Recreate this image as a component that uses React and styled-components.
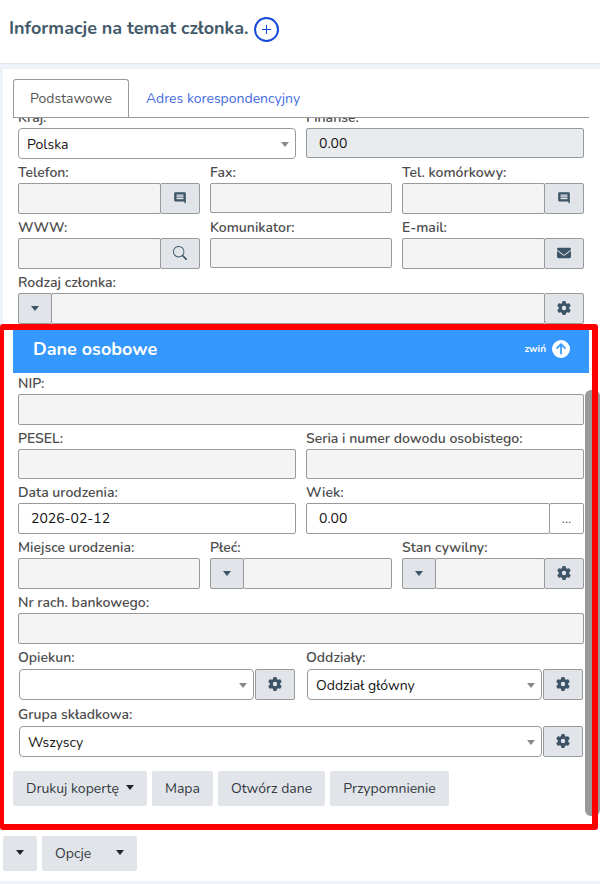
import styled, { createGlobalStyle } from "styled-components";
import { MdComment } from "react-icons/md";
import { FaEnvelope, FaGear, FaCircleArrowUp } from "react-icons/fa6";
import { BsSearch } from "react-icons/bs";

const GlobalStyle = createGlobalStyle`
  * {
    box-sizing: border-box;
  }
  body {
    margin: 0;
    background: #edf3f8;
    color: #444;
    font-family: Nunito, Lato, "Open Sans", sans-serif;
    font-size: 14px;
  }
  button, input, select {
    font: inherit;
  }
`;

const Header = styled.header`
  display: flex;
  align-items: center;
  gap: 6px;
  height: 64px;
  padding: 0 9px 5px;
  background: #fff;
  border-bottom: 1px solid #dfe7ec;
`;

const Title = styled.h1`
  margin: 0;
  padding-bottom: 2px;
  font-size: 18px;
  font-weight: bold;
  color: #435a6b;
`;

const AddButton = styled.button`
  display: flex;
  align-items: center;
  justify-content: center;
  width: 25px;
  height: 25px;
  padding: 0;
  border: 2px solid #1449d8;
  border-radius: 50%;
  background: #fff;
  color: #1449d8;
`;

const Panel = styled.main`
  margin: 5px 0 0 3px;
  padding-top: 10px;
  background: #fff;
`;

const Tabs = styled.nav`
  display: flex;
  margin: 0 11px 0 10px;
  border-bottom: 1px solid #999;
`;

const Tab = styled.a`
  padding: 0 16px;
  border: 1px solid ${({ $active }) => ($active ? "#999" : "transparent")};
  border-bottom: 0;
  border-radius: 3px 3px 0 0;
  line-height: 37px;
  color: ${({ $active }) => ($active ? "#555" : "#4169e1")};
  text-decoration: none;
`;

const ScrolledRows = styled.div`
  overflow: hidden;

  > :first-child {
    margin-top: -14px;
  }
`;

const Row = styled.div`
  display: grid;
  grid-template-columns: repeat(${({ $cols }) => $cols || 1}, minmax(0, 1fr));
  align-items: start;
  column-gap: 10px;
  padding: ${({ $flush }) => ($flush ? 0 : 3)}px 16px 0 15px;
`;

const Label = styled.label`
  display: block;
  font-weight: 600;
  line-height: 21px;
  color: #4c4c4c;
  white-space: nowrap;
`;

const Group = styled.div`
  display: flex;
  height: ${({ $short }) => ($short ? 30 : 31)}px;
`;

const Input = styled.input`
  flex: 1;
  min-width: 0;
  padding: 0 12px;
  border: 1px solid #999;
  border-radius: 2px;
  outline: none;
  background: ${({ $tone }) =>
    $tone === "white" ? "#fff" : $tone === "locked" ? "#e9ecef" : "#f4f4f4"};
  color: #111;

  &:focus {
    border-color: #3598fe;
  }
`;

const Addon = styled.button`
  display: flex;
  flex: none;
  align-items: center;
  justify-content: center;
  width: ${({ $width }) => $width || 40}px;
  margin-left: ${({ $side }) => ($side === "right" ? -1 : 0)}px;
  margin-right: ${({ $side }) => ($side === "left" ? -1 : 0)}px;
  padding: 0 0 1px;
  border: 1px solid #999;
  border-radius: 2px;
  background: ${({ $plain }) => ($plain ? "#fff" : "#e1e5ea")};
  color: ${({ $plain }) => ($plain ? "#555" : "#3d5467")};
`;

const SelectRow = styled.div`
  display: flex;
  gap: 1px;
  height: ${({ $inset }) => ($inset ? 33 : 31)}px;
  padding: ${({ $inset }) => ($inset ? 1 : 0)}px;
`;

const SelectBox = styled.div`
  display: grid;
  flex: 1;
  align-items: center;

  > * {
    grid-area: 1 / 1;
  }
  > svg {
    justify-self: end;
    margin: 2px 7px 0 0;
    pointer-events: none;
  }
`;

const Select = styled.select`
  width: 100%;
  height: 31px;
  padding: 2px 24px 0 8px;
  border: 1px solid #999;
  border-radius: 4px;
  appearance: none;
  background: #fff;
  color: #111;
`;

const Section = styled.section`
  position: relative;
  padding: 2px 0 24px;
`;

const Frame = styled.div`
  position: absolute;
  inset: 0 2px 0 -3px;
  border: 6px solid #fe0000;
  border-left-width: 4px;
  border-radius: 3px;
  pointer-events: none;
`;

const ScrollThumb = styled.div`
  position: absolute;
  top: 66px;
  right: 0;
  bottom: 14px;
  width: 15px;
  border-radius: 6px;
  background: #999;
`;

const SectionBar = styled.div`
  display: flex;
  align-items: center;
  justify-content: space-between;
  height: 47px;
  margin: 0 11px 0 10px;
  padding: 0 19px 2px 20px;
  background: #3598fe;
  color: #fff;
`;

const SectionTitle = styled.h2`
  margin: 0;
  font-size: 18px;
`;

const Collapse = styled.button`
  display: flex;
  align-items: center;
  gap: 6px;
  padding: 0;
  border: 0;
  background: none;
  color: #fff;
  font-size: 10px;
  font-weight: bold;
`;

const Actions = styled.div`
  display: flex;
  gap: 5px;
  padding: 13px 10px 0;
`;

const Button = styled.button`
  display: flex;
  align-items: center;
  gap: ${({ $gap }) => $gap || 7}px;
  height: 35px;
  padding: 0 13px;
  border: 0;
  border-radius: 2px;
  background: #e1e5ea;
  color: #333a40;
  white-space: nowrap;

  > svg {
    margin-bottom: 3px;
    color: #212529;
  }
`;

const Footer = styled.footer`
  display: flex;
  gap: 5px;
  padding: 6px 3px 10px;
  background: #fff;
`;

function Caret({ color = "currentColor" }) {
  return (
    <svg width="8" height="5" viewBox="0 0 8 5" aria-hidden="true">
      <path d="M0 0h8L4 5z" fill={color} />
    </svg>
  );
}

function TextField({ id, label, value, tone, short, menu, icon, iconLabel, dots }) {
  return (
    <div>
      <Label htmlFor={id}>{label}</Label>
      <Group $short={short}>
        {menu && (
          <Addon type="button" $side="left" $width={34} aria-label="Rozwiń">
            <Caret />
          </Addon>
        )}
        <Input id={id} defaultValue={value} $tone={tone} readOnly={tone === "locked"} />
        {icon && (
          <Addon type="button" $side="right" aria-label={iconLabel}>
            {icon}
          </Addon>
        )}
        {dots && (
          <Addon type="button" $side="right" $width={35} $plain>
            ...
          </Addon>
        )}
      </Group>
    </div>
  );
}

function SelectField({ id, label, options, settings }) {
  return (
    <div>
      <Label htmlFor={id}>{label}</Label>
      <SelectRow $inset={settings}>
        <SelectBox>
          <Select id={id}>
            {options.map((option) => (
              <option key={option}>{option}</option>
            ))}
          </Select>
          <Caret color="#888" />
        </SelectBox>
        {settings && (
          <Addon type="button" aria-label="Ustawienia">
            <FaGear size={14} />
          </Addon>
        )}
      </SelectRow>
    </div>
  );
}

export default function App() {
  const comment = <MdComment size={14} />;
  const gear = <FaGear size={14} />;

  return (
    <>
      <GlobalStyle />
      <Header>
        <Title>Informacje na temat członka.</Title>
        <AddButton type="button" aria-label="Dodaj">
          <svg width="9" height="9" viewBox="0 0 9 9">
            <path d="M4.5 0v9M0 4.5h9" stroke="currentColor" />
          </svg>
        </AddButton>
      </Header>

      <Panel>
        <Tabs>
          <Tab href="#podstawowe" $active>Podstawowe</Tab>
          <Tab href="#adres">Adres korespondencyjny</Tab>
        </Tabs>

        <ScrolledRows>
          <Row $cols={2}>
            <SelectField id="kraj" label="Kraj:" options={["Polska"]} />
            <TextField id="finanse" label="Finanse:" value="0.00" tone="locked" short />
          </Row>
          <Row $cols={3}>
            <TextField id="telefon" label="Telefon:" icon={comment} iconLabel="Wyślij SMS" />
            <TextField id="fax" label="Fax:" short />
            <TextField id="komorka" label="Tel. komórkowy:" icon={comment} iconLabel="Wyślij SMS" />
          </Row>
          <Row $cols={3}>
            <TextField id="www" label="WWW:" icon={<BsSearch size={14} />} iconLabel="Otwórz stronę" />
            <TextField id="komunikator" label="Komunikator:" short />
            <TextField id="email" label="E-mail:" icon={<FaEnvelope size={14} />} iconLabel="Wyślij e-mail" />
          </Row>
          <Row>
            <TextField id="rodzaj" label="Rodzaj członka:" menu icon={gear} iconLabel="Ustawienia" />
          </Row>
        </ScrolledRows>

        <Section>
          <SectionBar>
            <SectionTitle>Dane osobowe</SectionTitle>
            <Collapse type="button">
              zwiń
              <FaCircleArrowUp size={18} />
            </Collapse>
          </SectionBar>
          <Row $flush>
            <TextField id="nip" label="NIP:" />
          </Row>
          <Row $cols={2}>
            <TextField id="pesel" label="PESEL:" short />
            <TextField id="dowod" label="Seria i numer dowodu osobistego:" short />
          </Row>
          <Row $cols={2}>
            <TextField id="data" label="Data urodzenia:" value="2026-02-12" tone="white" />
            <TextField id="wiek" label="Wiek:" value="0.00" tone="white" dots />
          </Row>
          <Row $cols={3}>
            <TextField id="miejsce" label="Miejsce urodzenia:" />
            <TextField id="plec" label="Płeć:" menu />
            <TextField id="stan" label="Stan cywilny:" menu icon={gear} iconLabel="Ustawienia" />
          </Row>
          <Row>
            <TextField id="rachunek" label="Nr rach. bankowego:" />
          </Row>
          <Row $cols={2}>
            <SelectField id="opiekun" label="Opiekun:" options={[""]} settings />
            <SelectField id="oddzialy" label="Oddziały:" options={["Oddział główny"]} settings />
          </Row>
          <Row>
            <SelectField id="grupa" label="Grupa składkowa:" options={["Wszyscy"]} settings />
          </Row>
          <Actions>
            <Button type="button">Drukuj kopertę <Caret /></Button>
            <Button type="button">Mapa</Button>
            <Button type="button">Otwórz dane</Button>
            <Button type="button">Przypomnienie</Button>
          </Actions>
          <ScrollThumb />
          <Frame />
        </Section>
      </Panel>

      <Footer>
        <Button type="button" aria-label="Więcej"><Caret /></Button>
        <Button type="button" $gap={25}>Opcje <Caret /></Button>
      </Footer>
    </>
  );
}
